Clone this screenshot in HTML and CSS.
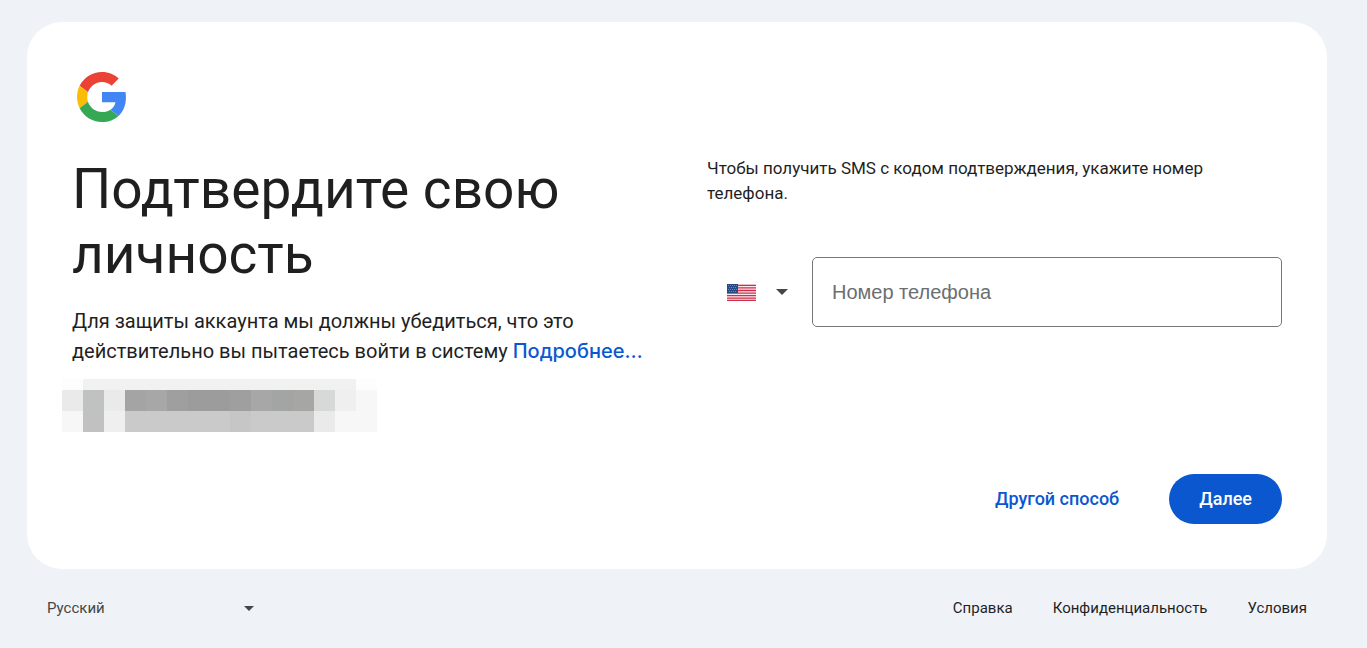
FILE: index.html
```html
<!DOCTYPE html>
<html lang="ru">
<head>
<meta charset="utf-8">
<meta name="viewport" content="width=device-width, initial-scale=1">
<title>Подтвердите свою личность</title>
<link rel="stylesheet" href="styles.css">
</head>
<body>
<main class="card">
  <svg class="logo" viewBox="0 0 48 48" role="img" aria-label="Google">
    <path fill="#ea4335" d="M24 9.5c3.54 0 6.71 1.22 9.21 3.6l6.85-6.85C35.9 2.38 30.47 0 24 0 14.62 0 6.51 5.38 2.56 13.22l7.98 6.19C12.43 13.72 17.74 9.5 24 9.5z"/>
    <path fill="#4285f4" d="M46.98 24.55c0-1.57-.15-3.09-.38-5.35H24v9.82h12.94c-.58 2.96-2.26 5.48-4.78 7.18l7.73 6c4.51-4.18 7.09-10.36 7.09-17.65z"/>
    <path fill="#fbbc05" d="M10.53 28.59c-.48-1.45-.76-2.99-.76-4.59s.27-3.14.76-4.59l-7.98-6.19C.92 16.46 0 20.12 0 24c0 3.88.92 7.54 2.56 10.78l7.97-6.19z"/>
    <path fill="#34a853" d="M24 48c6.48 0 11.93-2.13 15.89-5.81l-7.73-6c-2.15 1.45-4.92 2.3-8.16 2.3-6.26 0-11.57-4.22-13.47-9.91l-7.98 6.19C6.51 42.62 14.62 48 24 48z"/>
  </svg>
  <div class="columns">
    <section class="intro">
      <h1 class="title">Подтвердите свою личность</h1>
      <p class="lead">Для защиты аккаунта мы должны убедиться, что это действительно вы пытаетесь войти в систему <a class="more" href="#">Подробнее…</a></p>
      <svg class="account" viewBox="0 0 315 53" aria-hidden="true" shape-rendering="crispEdges">
        <path fill="#fdfdfd" d="M0 0h21v11H0zM294 0h21v11h-21z"/>
        <path fill="#f1f1f1" d="M21 0h273v11H21z"/>
        <path fill="#eaeaea" d="M0 11h21v21H0zM42 11h21v21H42zM252 32h21v21h-21z"/>
        <path fill="#bfc2c1" d="M21 11h21v21H21z"/>
        <path fill="#a4a4a4" d="M63 11h21v21H63z"/>
        <path fill="#a7a7a7" d="M84 11h21v21H84zM189 11h21v21h-21z"/>
        <path fill="#9f9f9f" d="M105 11h21v21h-21zM168 11h21v21h-21z"/>
        <path fill="#9c9c9c" d="M126 11h42v21h-42z"/>
        <path fill="#a3a5a4" d="M210 11h21v21h-21z"/>
        <path fill="#a6a6a4" d="M231 11h21v21h-21z"/>
        <path fill="#d6d9d8" d="M252 11h21v21h-21z"/>
        <path fill="#efefef" d="M273 11h21v21h-21zM42 32h21v21H42z"/>
        <path fill="#f7f7f7" d="M294 11h21v21h-21zM0 32h21v21H0zM273 32h42v21h-42z"/>
        <path fill="#c1c1c1" d="M21 32h21v21H21z"/>
        <path fill="#cacaca" d="M63 32h189v21H63z"/>
        <path fill="#c6c6c6" d="M168 32h21v21h-21z"/>
      </svg>
    </section>
    <form class="form">
      <p class="hint">Чтобы получить SMS с кодом подтверждения, укажите номер телефона.</p>
      <div class="phone">
        <div class="country">
          <svg class="flag" viewBox="0 0 29 17" aria-hidden="true">
            <path fill="#fbe9ec" d="M0 0h29v17H0z"/>
            <path stroke="#d02f4c" stroke-width="1.3" d="M0 1.3h29M0 3.9h29M0 6.5h29M0 9.1h29M0 11.7h29M0 14.1h29M0 16.4h29"/>
            <path fill="#254a87" d="M0 0h11v9H0z"/>
            <path stroke="#6d87b5" stroke-dasharray="1 1" d="M1 1.5h9M2 3.5h8M1 5.5h9M2 7.5h8"/>
          </svg>
          <svg class="arrow" viewBox="0 0 12 6" aria-hidden="true"><path d="M0 0h12L6 6z"/></svg>
          <select class="country-select" aria-label="Страна"><option>США</option></select>
        </div>
        <input class="phone-input" type="tel" placeholder="Номер телефона" aria-label="Номер телефона">
      </div>
      <div class="actions">
        <button class="button" type="button">Другой способ</button>
        <button class="button button-primary" type="submit">Далее</button>
      </div>
    </form>
  </div>
</main>
<footer class="footer">
  <div class="language">
    <select class="language-select" aria-label="Язык"><option>Русский</option></select>
    <svg class="arrow language-arrow" viewBox="0 0 10 5" aria-hidden="true"><path d="M0 0h10L5 5z"/></svg>
  </div>
  <nav class="links">
    <a class="link" href="#">Справка</a>
    <a class="link" href="#">Конфиденциальность</a>
    <a class="link" href="#">Условия</a>
  </nav>
</footer>
</body>
</html>
```

FILE: styles.css
```css
* { box-sizing: border-box; }

body {
  margin: 0;
  padding: 22px 40px 20px 27px;
  background: #eff3f8;
  color: #1f1f1f;
  font-family: Roboto, "Liberation Sans", sans-serif;
}

.card {
  padding: 50px 45px 45px;
  border-radius: 35px;
  background: #fff;
}

.logo {
  display: block;
  width: 50px;
  height: 50px;
  margin-left: 5px;
}

.columns {
  display: grid;
  grid-template-columns: 1fr 1fr;
  gap: 60px;
  margin-top: 34px;
}

.title {
  margin: 0;
  padding-top: 1px;
  font-size: 55px;
  font-weight: 400;
  line-height: 65px;
}

.lead {
  margin: 19px 0 13px;
  font-size: 20px;
  line-height: 30px;
}

.more {
  color: #0b57d0;
  font-family: Inter, sans-serif;
  font-weight: 500;
  line-height: 20px;
  text-decoration: none;
}

.account {
  display: block;
  width: 315px;
  height: 53px;
  margin-left: -10px;
}

.form {
  display: flex;
  flex-direction: column;
}

.hint {
  margin: 0;
  font-size: 17px;
  line-height: 25px;
}

.phone {
  display: flex;
  margin-top: 51px;
}

.country {
  position: relative;
  display: flex;
  align-items: center;
  gap: 20px;
  width: 105px;
  padding-left: 20px;
}

.country-select {
  position: absolute;
  inset: 0;
  width: 100%;
  opacity: 0;
}

.flag {
  width: 29px;
  height: 17px;
}

.arrow {
  width: 12px;
  height: 6px;
  fill: #444746;
}

.phone-input {
  flex: 1;
  min-width: 0;
  height: 70px;
  padding: 0 19px;
  border: 1px solid #747775;
  border-radius: 5px;
  background: #fff;
  color: #1f1f1f;
  font-family: "Liberation Sans", Arial, sans-serif;
  font-size: 20px;
}

.phone-input::placeholder { color: #6b6e72; }

.actions {
  display: flex;
  justify-content: flex-end;
  gap: 20px;
  margin-top: 147px;
}

.button {
  height: 50px;
  padding: 0 30px 2px;
  border: 0;
  border-radius: 25px;
  background: none;
  color: #0b57d0;
  font-family: inherit;
  font-size: 18px;
  font-weight: 500;
}

.button-primary {
  background: #0b57d0;
  color: #fff;
}

.footer {
  display: flex;
  justify-content: space-between;
  align-items: center;
  padding: 24px 20px 0;
  font-size: 15px;
  line-height: 30px;
}

.language {
  display: grid;
  align-items: center;
  width: 207px;
}

.language-select {
  grid-area: 1 / 1;
  height: 30px;
  padding: 0;
  border: 0;
  appearance: none;
  background: none;
  color: #444746;
  font: inherit;
}

.language-arrow {
  grid-area: 1 / 1;
  justify-self: end;
  width: 10px;
  height: 5px;
  pointer-events: none;
}

.links {
  display: flex;
  gap: 40px;
}

.link {
  color: #1f1f1f;
  text-decoration: none;
}
```
